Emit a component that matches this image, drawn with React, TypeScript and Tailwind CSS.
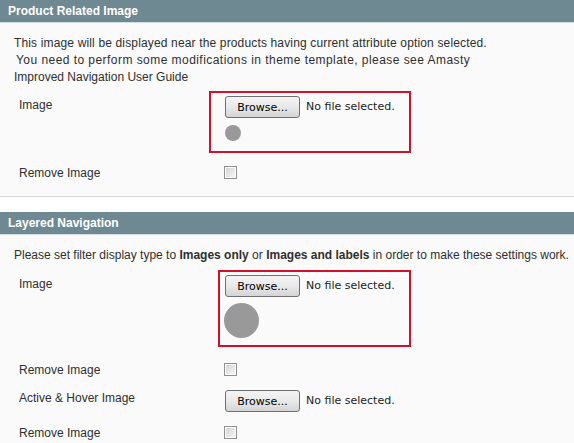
import React from 'react';

const arial = { fontFamily: '"Liberation Sans", Arial, sans-serif' };

function BrowseField() {
  return (
    <div className="flex items-center" style={{ fontFamily: '"DejaVu Sans", Tahoma, sans-serif' }}>
      <button className="w-[75px] h-[22px] rounded-[3px] border border-[#707070] bg-gradient-to-b from-[#f4f4f4] via-[#e9e9e9] to-[#d4d4d4] text-[11px] text-black leading-none">
        Browse...
      </button>
      <span className="ml-[6px] text-[11px] text-[#222]">No file selected.</span>
    </div>
  );
}

function Checkbox() {
  return (
    <span className="block w-[13px] h-[13px] border border-[#8f8f8f] bg-white p-[1px]">
      <span className="block w-full h-full bg-gradient-to-br from-[#d4d4d4] to-[#f6f6f6]" />
    </span>
  );
}

function Header({ title }: { title: string }) {
  return (
    <div className="h-[23px] bg-[#6f8992] border-b border-[#d4dcdf] pl-[8px] text-white font-bold text-[12px] leading-[22px]">
      {title}
    </div>
  );
}

export default function App() {
  return (
    <div className="w-[574px] h-[443px] overflow-hidden bg-white text-[12px] text-[#2f2f2f]" style={arial}>
      {/* Product Related Image */}
      <div className="border-b border-[#d6d6d6] bg-[#fafafa]">
        <Header title="Product Related Image" />
        <div className="pt-[12px] pb-[15px]">
          <div className="px-[14px] leading-[17px] whitespace-nowrap">
            <div className="tracking-[0.15px]">
              This image will be displayed near the products having current attribute option selected.
            </div>
            <div className="pl-[2px] tracking-[0.45px]">
              You need to perform some modifications in theme template, please see Amasty
            </div>
            <div>Improved Navigation User Guide</div>
          </div>

          <div className="flex items-start mt-[5px] pl-[19px]">
            <div className="w-[190px] pt-[6px] leading-[17px]">Image</div>
            <div className="w-[202px] h-[62px] border-2 border-[#d0112b] pl-[14px] pt-[3px]">
              <BrowseField />
              <div className="mt-[7px] w-[16px] h-[16px] rounded-full bg-[#999]" />
            </div>
          </div>

          <div className="flex items-center mt-[11px] pl-[19px] h-[17px]">
            <div className="w-[205px]">Remove Image</div>
            <Checkbox />
          </div>
        </div>
      </div>

      {/* Layered Navigation */}
      <div className="mt-[15px] bg-[#fafafa]">
        <Header title="Layered Navigation" />
        <div className="pt-[12px] pb-[20px]">
          <div className="px-[14px] leading-[17px] whitespace-nowrap">
            Please set filter display type to <b>Images only</b> or <b>Images and labels</b> in order to make these settings work.
          </div>

          <div className="flex items-start mt-[6px] pl-[19px]">
            <div className="w-[199px] pt-[6px] leading-[17px]">Image</div>
            <div className="w-[193px] h-[77px] border-2 border-[#d0112b] pl-[5px] pt-[3px]">
              <BrowseField />
              <div className="mt-[6px] -ml-[1px] w-[35px] h-[35px] rounded-full bg-[#999]" />
            </div>
          </div>

          <div className="flex items-center mt-[14px] pl-[19px] h-[17px]">
            <div className="w-[205px]">Remove Image</div>
            <Checkbox />
          </div>

          <div className="flex items-start mt-[12px] pl-[19px]">
            <div className="w-[206px] leading-[17px]">Active &amp; Hover Image</div>
            <BrowseField />
          </div>

          <div className="flex items-center mt-[12px] pl-[19px] h-[17px]">
            <div className="w-[205px]">Remove Image</div>
            <Checkbox />
          </div>
        </div>
      </div>
    </div>
  );
}
